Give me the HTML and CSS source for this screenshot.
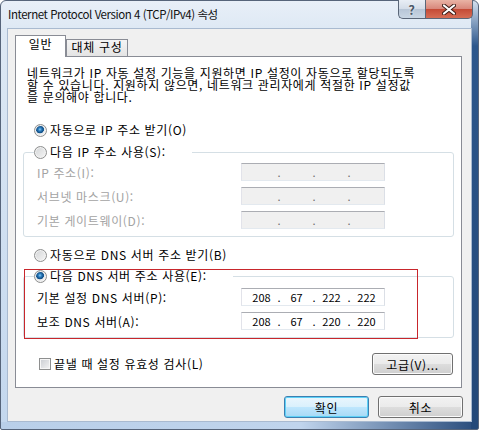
FILE: index.html
```html
<!DOCTYPE html>
<html lang="ko">

<head>
    <meta charset="UTF-8">
    <title>Internet Protocol Version 4 (TCP/IPv4) 속성</title>
    <link rel="stylesheet" href="styles.css">
</head>

<body>
    <div class="window">
        <div class="titlebar">
            <span class="title">Internet Protocol Version 4 (TCP/IPv4) 속성</span>
            <div class="caption-buttons">
                <span class="btn-help">?</span>
                <span class="btn-close">
                    <svg width="14" height="11" viewBox="0 0 14 11">
                        <path d="M2 1.5 L12 9.5 M12 1.5 L2 9.5" stroke="#3a1a14" stroke-width="4" stroke-linecap="round" />
                        <path d="M2 1.5 L12 9.5 M12 1.5 L2 9.5" stroke="#fff" stroke-width="2.2" stroke-linecap="round" />
                    </svg>
                </span>
            </div>
        </div>

        <div class="client">
            <div class="tabs">
                <div class="tab active">일반</div>
                <div class="tab">대체 구성</div>
            </div>

            <div class="tab-page">
                <p class="desc">네트워크가 IP 자동 설정 기능을 지원하면 IP 설정이 자동으로 할당되도록<br>할 수 있습니다. 지원하지 않으면, 네트워크 관리자에게 적절한 IP 설정값<br>을 문의해야 합니다.</p>

                <div class="option first"><span class="radio checked"></span>자동으로 IP 주소 받기(O)</div>

                <fieldset class="group ip-group">
                    <legend class="option"><span class="radio"></span>다음 IP 주소 사용(S):</legend>
                    <div class="field disabled">
                        <label>IP 주소(I):</label>
                        <div class="ip-box"><span class="seg"></span><span class="dot">.</span><span class="seg"></span><span class="dot">.</span><span class="seg"></span><span class="dot">.</span><span class="seg"></span></div>
                    </div>
                    <div class="field disabled">
                        <label>서브넷 마스크(U):</label>
                        <div class="ip-box"><span class="seg"></span><span class="dot">.</span><span class="seg"></span><span class="dot">.</span><span class="seg"></span><span class="dot">.</span><span class="seg"></span></div>
                    </div>
                    <div class="field disabled">
                        <label>기본 게이트웨이(D):</label>
                        <div class="ip-box"><span class="seg"></span><span class="dot">.</span><span class="seg"></span><span class="dot">.</span><span class="seg"></span><span class="dot">.</span><span class="seg"></span></div>
                    </div>
                </fieldset>

                <div class="option dns-auto"><span class="radio"></span>자동으로 DNS 서버 주소 받기(B)</div>

                <fieldset class="group dns-group">
                    <legend class="option"><span class="radio checked"></span>다음 DNS 서버 주소 사용(E):</legend>
                    <div class="field">
                        <label>기본 설정 DNS 서버(P):</label>
                        <div class="ip-box"><span class="seg">208</span><span class="dot">.</span><span class="seg">67</span><span class="dot">.</span><span class="seg">222</span><span class="dot">.</span><span class="seg">222</span></div>
                    </div>
                    <div class="field">
                        <label>보조 DNS 서버(A):</label>
                        <div class="ip-box"><span class="seg">208</span><span class="dot">.</span><span class="seg">67</span><span class="dot">.</span><span class="seg">220</span><span class="dot">.</span><span class="seg">220</span></div>
                    </div>
                </fieldset>

                <div class="footer-row">
                    <div class="option"><span class="checkbox"></span>끝낼 때 설정 유효성 검사(L)</div>
                    <button class="button advanced">고급(V)...</button>
                </div>

                <!-- annotation drawn over the DNS group -->
                <div class="highlight"></div>
            </div>

            <div class="dialog-buttons">
                <button class="button default">확인</button>
                <button class="button">취소</button>
            </div>
        </div>
    </div>
</body>

</html>
```

FILE: styles.css
```css
* {
    box-sizing: border-box;
}

body {
    margin: 0;
    font-family: "Noto Sans CJK KR", "Noto Sans", sans-serif;
    font-size: 12px;
    letter-spacing: 0.65px;
    color: #000;
    background: #fff;
}

/* window frame */
.window {
    width: 479px;
    height: 430px;
    display: flex;
    flex-direction: column;
    border: 1px solid #56647a;
    border-radius: 6px 6px 2px 2px;
    background:
        linear-gradient(#d3e0ef, #2d578c 45px, #234878) right top / 7px 100% no-repeat,
        linear-gradient(to right, #b9cfe9 0, #c0d4ec 300px, #274a7a 100%) left bottom / 100% 7px no-repeat,
        linear-gradient(#e8eff8, #dde8f4 30px, #c3d7ee);
}

.titlebar {
    height: 27px;
    display: flex;
    align-items: flex-start;
}

.title {
    padding-left: 7px;
    font-size: 11.5px;
    letter-spacing: -0.45px;
    line-height: 26px;
    color: #111;
}

.caption-buttons {
    margin-left: auto;
    margin-right: 5px;
    margin-top: -1px;
    display: flex;
}

.btn-help,
.btn-close {
    height: 19px;
    display: flex;
    align-items: center;
    justify-content: center;
    border: 1px solid #5a6678;
    border-top: 0;
}

.btn-help {
    width: 27px;
    border-radius: 0 0 0 5px;
    border-right: 0;
    background: linear-gradient(#e9eef5, #d3dce8 50%, #b7c5d6 51%, #c9d6e4);
    font-weight: bold;
    font-size: 13px;
    color: #4b5868;
    text-shadow: 0 0 2px #fff;
}

.btn-close {
    width: 48px;
    border-radius: 0 0 5px 0;
    background: linear-gradient(#e9b3a5, #d8867a 50%, #c44a36 51%, #d66d55);
}

/* client area */
.client {
    flex: 1;
    margin: 0 6px 7px 6px;
    background: #f0f0f0;
    border: 1px solid #a9bad0;
    display: flex;
    flex-direction: column;
}

.tabs {
    display: flex;
    align-items: flex-end;
    padding: 6px 0 0 7px;
}

.tab {
    height: 17px;
    width: 62px;
    border: 1px solid #898c95;
    border-bottom: 0;
    background: linear-gradient(#f4f4f4, #e4e4e4);
    text-align: center;
    line-height: 14px;
    padding-top: 0;
}

.tab.active {
    width: 51px;
    height: 22px;
    padding-top: 1px;
    background: #fff;
    margin-bottom: -1px;
    position: relative;
    z-index: 1;
}

.tab-page {
    position: relative;
    width: 447px;
    height: 332px;
    margin-left: 7px;
    padding: 10px 7px 0;
    background: #fff;
    border: 1px solid #898c95;
}

/* the original dialog packs these lines tightly */
.desc {
    margin: 0 0 0 4px;
    line-height: 12px;
}

.option {
    display: flex;
    align-items: center;
    height: 14px;
    line-height: 14px;
    margin-left: 11px;
    white-space: nowrap;
}

.option.first {
    margin-top: 20px;
}

.option.dns-auto {
    margin-top: 11px;
}

.radio {
    width: 13px;
    height: 13px;
    flex: none;
    margin-right: 3px;
    border-radius: 50%;
    border: 1px solid #8e8f8f;
    background: linear-gradient(135deg, #d2d4d6, #f6f6f6);
    box-shadow: inset 0 0 0 1px #f3f3f3;
}

.radio.checked {
    background:
        radial-gradient(circle at 45% 40%, #8fd0f5 0, #2f80c2 1.6px, #124f86 3.3px, #1a5e98 3.8px, transparent 4.2px),
        linear-gradient(135deg, #d2d4d6, #f6f6f6);
}

.checkbox {
    width: 12px;
    height: 12px;
    flex: none;
    margin-right: 3px;
    border: 1px solid #8e8f8f;
    background: linear-gradient(135deg, #c9ccd1, #f4f4f4);
    box-shadow: inset 0 0 0 1px #f6f6f6;
}

/* group boxes */
.group {
    margin: 0;
    padding: 4px 13px 7px;
    border: 1px solid #d5dfe5;
    border-radius: 3px;
}

.group legend.option {
    margin-left: -3px;
    padding: 0 26px 0 0;
}

.ip-group {
    margin-top: 8px;
}

.dns-group {
    margin-top: 7px;
    padding-top: 5px;
}

.field {
    display: grid;
    grid-template-columns: 204px 144px;
    align-items: center;
    height: 18px;
}

.field + .field {
    margin-top: 6px;
}

.field.disabled label {
    color: #a3a3a3;
}

.ip-box {
    height: 18px;
    display: flex;
    align-items: center;
    padding: 0 2px 0 4px;
    border: 1px solid;
    border-color: #abadb3 #dbdfe6 #e3e9ef #e2e3ea;
    background: #fff;
    font-size: 11px;
    letter-spacing: 0;
}

.field.disabled .ip-box {
    background: #f0f0f0;
    color: #6d6d6d;
}

.ip-box .seg {
    width: 31px;
    text-align: center;
}

.ip-box .dot {
    width: 4px;
    text-align: center;
}

.footer-row {
    display: flex;
    align-items: center;
    justify-content: space-between;
    margin-top: 15px;
}

.footer-row .option {
    margin-left: 16px;
}

/* push buttons */
.button {
    height: 22px;
    width: 85px;
    padding: 0;
    font: inherit;
    letter-spacing: 0.65px;
    color: #000;
    border: 1px solid #707070;
    border-radius: 3px;
    background: linear-gradient(#f2f2f2, #ebebeb 50%, #dddddd 51%, #cfcfcf);
    box-shadow: inset 0 0 0 1px #fbfbfb;
}

.button.advanced {
    width: 81px;
    margin-right: 1px;
}

.button.default {
    border-color: #3c7fb1;
    background: linear-gradient(#eaf6fd, #d9f0fc 50%, #bee6fd 51%, #a7d9f5);
    box-shadow: inset 0 0 0 1px #5ed1f7;
}

.dialog-buttons {
    display: flex;
    justify-content: flex-end;
    gap: 9px;
    margin-top: 8px;
    padding-right: 8px;
}

.highlight {
    position: absolute;
    left: 8px;
    top: 212px;
    width: 394px;
    height: 70px;
    border: 1px solid #c8262c;
    pointer-events: none;
}
```
